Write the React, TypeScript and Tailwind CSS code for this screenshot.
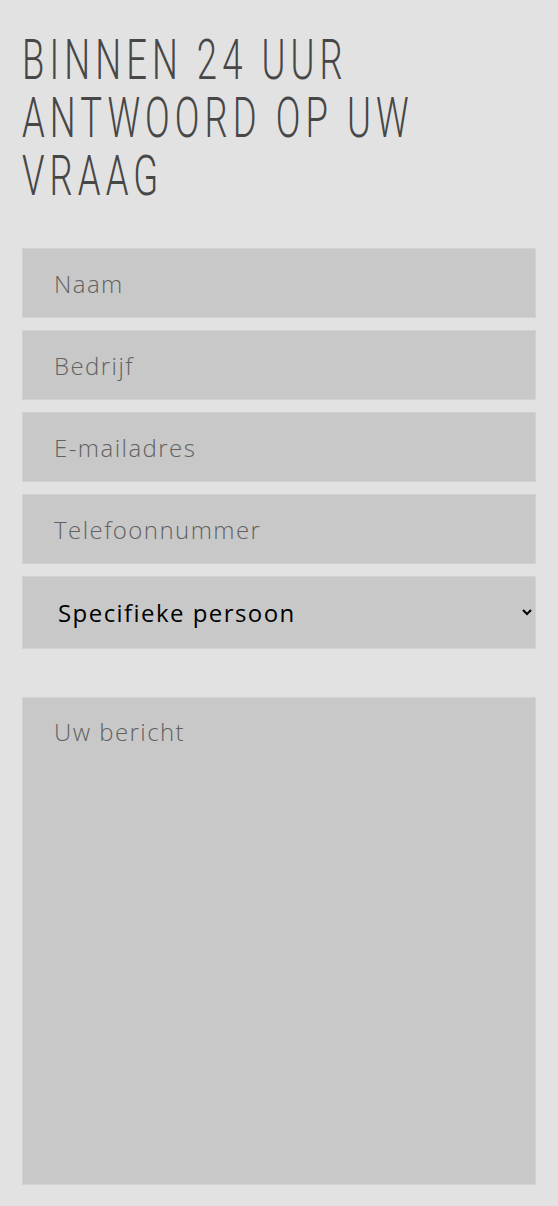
import { useState } from 'react';

const fieldClass =
  'block w-full h-[70px] bg-[#c8c8c8] border border-[#d2d2d2] px-[31px] text-[24px] font-light tracking-[0.06em] text-[#333] placeholder:text-[#626262] outline-none';

const headingLines = ['Binnen 24 uur', 'antwoord op uw', 'vraag'];

export default function App() {
  const [person, setPerson] = useState('');

  return (
    <div
      className="min-h-[1206px] bg-[#e2e2e2] px-[22px] pt-[31px]"
      style={{ fontFamily: '"Open Sans", "Noto Sans", sans-serif' }}
    >
      <h1
        className="text-[56px] leading-[58px] font-light uppercase tracking-[0.14em] text-[#474747]"
        style={{ fontFamily: 'Roboto, "Liberation Sans", sans-serif' }}
      >
        {headingLines.map((line) => (
          <span key={line} className="block origin-left scale-x-[0.65] whitespace-nowrap">
            {line}
          </span>
        ))}
      </h1>

      <form className="mt-[43px] flex flex-col gap-[12px]">
        <input className={fieldClass} placeholder="Naam" />
        <input className={fieldClass} placeholder="Bedrijf" />
        <input className={fieldClass} placeholder="E-mailadres" />
        <input className={fieldClass} placeholder="Telefoonnummer" />
        <select
          className="block w-full h-[73px] bg-[#c8c8c8] border border-[#d2d2d2] pl-[31px] pr-[6px] text-[24px] tracking-[0.06em] text-black outline-none"
          value={person}
          onChange={(e) => setPerson(e.target.value)}
        >
          <option value="">Specifieke persoon</option>
        </select>
        <textarea
          className="mt-[36px] block w-full h-[488px] resize-none bg-[#c8c8c8] border border-[#d2d2d2] px-[31px] pt-[16px] text-[24px] font-light tracking-[0.06em] text-[#333] placeholder:text-[#626262] outline-none"
          placeholder="Uw bericht"
        />
      </form>
    </div>
  );
}
